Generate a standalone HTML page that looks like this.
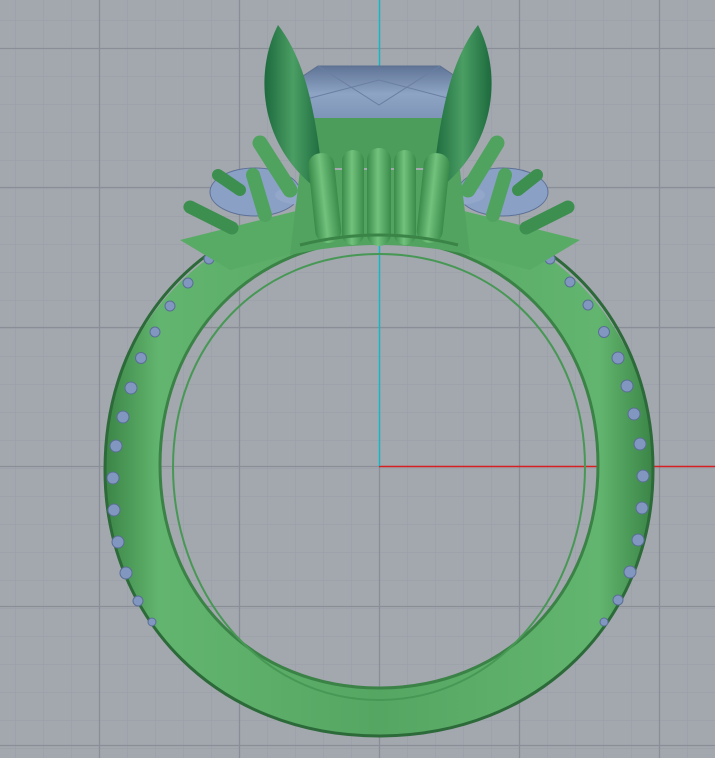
<!DOCTYPE html>
<html><head><style>html,body{margin:0;padding:0;background:#a3a7ae;}svg{display:block}</style></head>
<body>
<svg width="715" height="758" viewBox="0 0 715 758" xmlns="http://www.w3.org/2000/svg">
<defs>
<pattern id="g" x="15" y="20" width="28" height="28" patternUnits="userSpaceOnUse">
<path d="M0 0V28M0 0H28" stroke="#999da5" stroke-width="1" fill="none"/>
</pattern>
<linearGradient id="band" x1="0" y1="0" x2="1" y2="0">
<stop offset="0" stop-color="#3a8446"/><stop offset="0.1" stop-color="#62b56e"/><stop offset="0.5" stop-color="#55a662"/><stop offset="0.9" stop-color="#62b56e"/><stop offset="1" stop-color="#3a8446"/>
</linearGradient>
<linearGradient id="claw" x1="0" y1="0" x2="1" y2="0">
<stop offset="0" stop-color="#1d6a3e"/><stop offset="0.5" stop-color="#4a9e63"/><stop offset="1" stop-color="#1d6a3e"/>
</linearGradient>
<linearGradient id="prong" x1="0" y1="0" x2="1" y2="0">
<stop offset="0" stop-color="#3a8a4a"/><stop offset="0.45" stop-color="#72c27d"/><stop offset="1" stop-color="#3a8a4a"/>
</linearGradient>
<linearGradient id="stone" x1="0" y1="0" x2="0" y2="1">
<stop offset="0" stop-color="#5f7496"/><stop offset="0.5" stop-color="#8ea4c4"/><stop offset="1" stop-color="#7d93b6"/>
</linearGradient>
</defs>
<rect width="715" height="758" fill="#a3a7ae"/>
<rect width="715" height="758" fill="url(#g)"/>
<g stroke="#8a8e96" stroke-width="1.3">
<line x1="99.5" y1="0" x2="99.5" y2="758"/><line x1="239.5" y1="0" x2="239.5" y2="758"/><line x1="519.5" y1="0" x2="519.5" y2="758"/><line x1="659.5" y1="0" x2="659.5" y2="758"/>
<line x1="0" y1="48.5" x2="715" y2="48.5"/><line x1="0" y1="187.5" x2="715" y2="187.5"/><line x1="0" y1="327.5" x2="715" y2="327.5"/><line x1="0" y1="606.5" x2="715" y2="606.5"/><line x1="0" y1="745.5" x2="715" y2="745.5"/>
<line x1="0" y1="466.5" x2="379" y2="466.5"/><line x1="379.5" y1="466" x2="379.5" y2="758"/>
</g>
<line x1="379" y1="466.5" x2="715" y2="466.5" stroke="#d42020" stroke-width="1.5"/>
<line x1="379.5" y1="0" x2="379.5" y2="466" stroke="#14b8c4" stroke-width="1.5"/>
<path fill-rule="evenodd" fill="url(#band)" d="M379 205 C 540 205 654 320 654 470 C 654 620 540 737 379 737 C 218 737 104 620 104 470 C 104 320 218 205 379 205 Z M379 240 C 505 240 598 335 598 465 C 598 595 505 688 379 688 C 253 688 160 595 160 465 C 160 335 253 240 379 240 Z"/>
<path fill="none" stroke="#3a8246" stroke-width="3" d="M379 240 C 505 240 598 335 598 465 C 598 595 505 688 379 688 C 253 688 160 595 160 465 C 160 335 253 240 379 240 Z"/>
<path fill="none" stroke="#479855" stroke-width="2" d="M379 254 C 500 254 585 345 585 467 C 585 590 500 700 379 700 C 258 700 173 590 173 467 C 173 345 258 254 379 254 Z"/>
<path fill="none" stroke="#2c6a39" stroke-width="3" d="M379 736 C 218 736 105 620 105 470 C 105 360 160 280 230 240 M528 240 C 600 280 653 360 653 470 C 653 620 540 736 379 736"/>
<g fill="#8197c0" stroke="#5a6e95" stroke-width="1">
<circle cx="235" cy="237" r="5"/><circle cx="209" cy="259" r="5"/><circle cx="188" cy="283" r="5"/><circle cx="170" cy="306" r="5"/><circle cx="155" cy="332" r="5"/><circle cx="141" cy="358" r="5.5"/><circle cx="131" cy="388" r="6"/><circle cx="123" cy="417" r="6"/><circle cx="116" cy="446" r="6"/><circle cx="113" cy="478" r="6"/><circle cx="114" cy="510" r="6"/><circle cx="118" cy="542" r="6"/><circle cx="126" cy="573" r="6"/><circle cx="138" cy="601" r="5"/><circle cx="152" cy="622" r="4"/>
<circle cx="525" cy="237" r="5"/><circle cx="550" cy="259" r="5"/><circle cx="570" cy="282" r="5"/><circle cx="588" cy="305" r="5"/><circle cx="604" cy="332" r="5.5"/><circle cx="618" cy="358" r="6"/><circle cx="627" cy="386" r="6"/><circle cx="634" cy="414" r="6"/><circle cx="640" cy="444" r="6"/><circle cx="643" cy="476" r="6"/><circle cx="642" cy="508" r="6"/><circle cx="638" cy="540" r="6"/><circle cx="630" cy="572" r="6"/><circle cx="618" cy="600" r="5"/><circle cx="604" cy="622" r="4"/>
</g>
<ellipse cx="255" cy="192" rx="45" ry="24" fill="#8aa0c4" stroke="#5d7196"/>
<ellipse cx="503" cy="192" rx="45" ry="24" fill="#8aa0c4" stroke="#5d7196"/>
<ellipse cx="305" cy="195" rx="30" ry="10" fill="#92a7c9"/>
<ellipse cx="455" cy="195" rx="30" ry="10" fill="#92a7c9"/>
<path d="M300 78 L318 66 L440 66 L458 78 L455 122 L303 122 Z" fill="url(#stone)" stroke="#5c7091"/>
<path d="M318 66 L379 105 L440 66 M303 100 L379 80 L455 100" stroke="#6a7fa2" fill="none"/>
<rect x="303" y="118" width="152" height="50" fill="#4c9c5b"/>
<path d="M180 240 L300 210 L305 250 L230 270 Z" fill="#58ab65"/>
<path d="M580 240 L460 210 L455 250 L530 270 Z" fill="#58ab65"/>
<path d="M300 170 L460 170 L470 255 Q379 235 290 255 Z" fill="#52a35f"/>
<g stroke-linecap="round" fill="none">
<line x1="190" y1="207" x2="232" y2="228" stroke="#3d8f50" stroke-width="13"/>
<line x1="218" y1="175" x2="240" y2="190" stroke="#3d8f50" stroke-width="12"/>
<line x1="253" y1="175" x2="265" y2="215" stroke="#4fa35e" stroke-width="14"/>
<line x1="260" y1="143" x2="290" y2="190" stroke="#4fa35e" stroke-width="15"/>
<line x1="568" y1="207" x2="526" y2="228" stroke="#3d8f50" stroke-width="13"/>
<line x1="537" y1="175" x2="518" y2="190" stroke="#3d8f50" stroke-width="12"/>
<line x1="505" y1="175" x2="493" y2="215" stroke="#4fa35e" stroke-width="14"/>
<line x1="497" y1="143" x2="468" y2="190" stroke="#4fa35e" stroke-width="15"/>
</g>
<path d="M278 25 C 255 70 258 140 312 185 L 322 172 C 315 110 305 60 278 25 Z" fill="url(#claw)"/>
<path d="M478 25 C 501 70 498 140 444 185 L 434 172 C 441 110 451 60 478 25 Z" fill="url(#claw)"/>
<g>
<rect x="312" y="153" width="26" height="90" rx="12" fill="url(#prong)" transform="rotate(-6 325 200)"/>
<rect x="342" y="150" width="22" height="95" rx="11" fill="url(#prong)"/>
<rect x="367" y="148" width="24" height="98" rx="12" fill="url(#prong)"/>
<rect x="394" y="150" width="22" height="95" rx="11" fill="url(#prong)"/>
<rect x="420" y="153" width="26" height="90" rx="12" fill="url(#prong)" transform="rotate(6 433 200)"/>
</g>
<path d="M300 245 Q379 225 458 245" stroke="#3b8447" stroke-width="3" fill="none"/>
</svg>
</body></html>
